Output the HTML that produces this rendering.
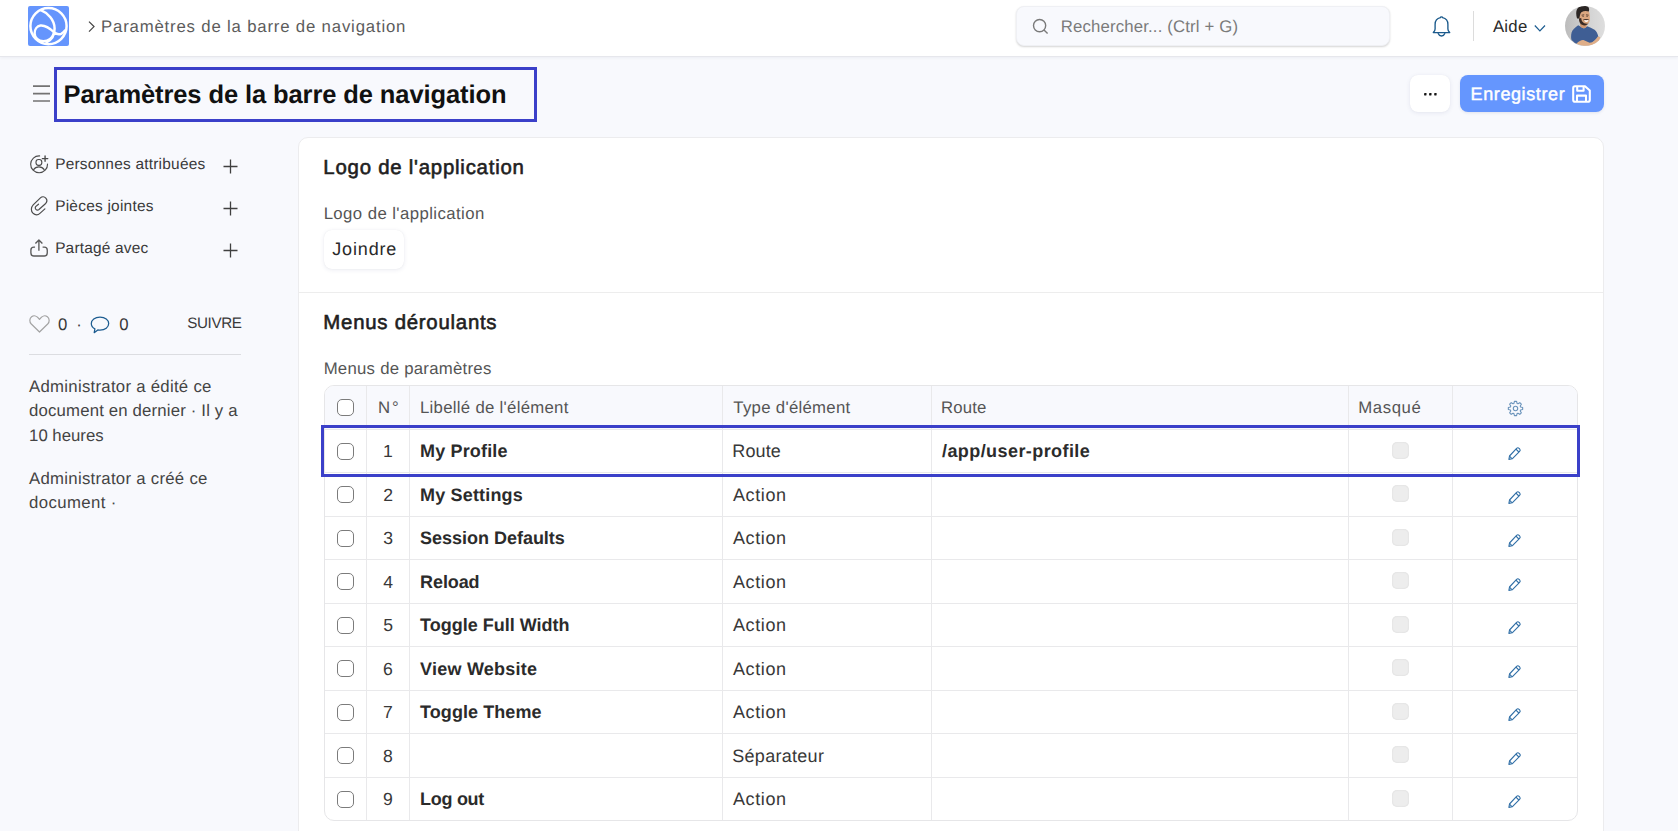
<!DOCTYPE html>
<html lang="fr">
<head>
<meta charset="utf-8">
<title>Paramètres de la barre de navigation</title>
<style>
html,body{margin:0;padding:0}
body{width:1678px;height:831px;overflow:hidden;position:relative;background:#f8f9fd;font-family:"Liberation Sans",sans-serif;}
.t{position:absolute;text-rendering:geometricPrecision;white-space:pre;line-height:20px;font-family:"Liberation Sans",sans-serif;}
.abs{position:absolute;box-sizing:border-box}
.navbar{left:0;top:0;width:1678px;height:57px;background:#fff;border-bottom:1px solid #e6e7ec;box-shadow:0 1px 3px rgba(40,50,90,.06)}
.logo{left:28px;top:6px;width:41px;height:40px;background:#6595fd;border-radius:2px}
.search{left:1016.4px;top:6px;width:374px;height:40px;background:#f8f9fd;border:1px solid #eff0f4;border-radius:8px;box-shadow:0 1px 2px rgba(0,0,0,.17)}
.vdiv{left:1473px;top:11px;width:1px;height:30px;background:#dcdcdc}
.avatar{left:1565px;top:6px;width:40px;height:40px;border-radius:50%;overflow:hidden}
.hl{border:3px solid #3b40c9}
.titlebox{left:54px;top:67px;width:483px;height:55px}
.btn-more{left:1410px;top:75px;width:40px;height:37px;background:#fff;border-radius:8px;box-shadow:0 1px 4px rgba(60,70,130,.10),0 0 1px rgba(0,0,0,.06)}
.btn-save{left:1460px;top:75px;width:144px;height:37px;background:#6596fe;border-radius:8px;box-shadow:0 1px 3px rgba(60,70,130,.12)}
.card{left:298px;top:137px;width:1306px;height:720px;background:#fff;border:1px solid #ececee;border-radius:10px}
.secline{left:299px;top:292px;width:1304px;height:1px;background:#ededed}
.btn-attach{left:324px;top:230px;width:80px;height:39px;background:#fff;border-radius:8px;box-shadow:0 1px 4px rgba(60,70,130,.10),0 0 1px rgba(0,0,0,.08)}
.sideline{left:29px;top:354px;width:212px;height:1px;background:#dcdde1}
.grid{left:324px;top:385px;width:1254px;height:436px;border:1px solid #e6e6e8;border-radius:10px;overflow:hidden;background:#fff}
.grid .head{left:0;top:0;width:100%;height:43px;background:#f8f9fd}
.hline{left:0;width:100%;height:1px;background:#e9e9eb}
.vline{top:0;width:1px;height:100%;background:#e9e9eb}
.cb{width:17px;height:17px;border:1px solid #7b7b7b;border-radius:5px;background:#fff}
.cbd{width:17px;height:17px;border-radius:5px;background:#ededed;box-shadow:inset 0 0 2px rgba(0,0,0,.10)}
.rowhl{left:321px;top:425px;width:1259px;height:52px}
svg{position:absolute;overflow:visible}

</style>
</head>
<body>
<header>
<div class="abs navbar"></div>
<div class="abs logo"><svg width="41" height="40" viewBox="0 0 41 40" fill="none" stroke="#fff" stroke-width="2.5" stroke-linecap="round"><circle cx="20.5" cy="20.1" r="18.1"/><path d="M12.8 4.2 C 20 7, 26.6 14, 26.6 22.5 C 26.6 29, 23.5 34, 18.5 36.4"/><path d="M26.3 26.6 C 22 22.5, 17 19.2, 12.5 19.6 C 9 20, 6.6 23.5, 6.6 27.6 C 6.6 32, 10.4 35.2, 15.4 35.2 C 20.5 35.2, 24.5 31.5, 26.3 26.6 C 28.5 28.2, 31 28.8, 33.2 27.8 C 34.8 27, 36 25.8, 36.8 24.6"/></svg></div>
<svg style="left:87px;top:20px" width="9" height="13" viewBox="0 0 9 13" fill="none" stroke="#474747" stroke-width="1.25"><path d="M2 1.6 L7 6.6 L2 11.6"/></svg>
<div class="abs search"></div>
<svg style="left:1032px;top:18px" width="17" height="17" viewBox="0 0 17 17" fill="none" stroke="#7a7a7a" stroke-width="1.4"><circle cx="7.6" cy="7.6" r="6.1"/><path d="M12 12 L15.6 15.4"/></svg>
<svg style="left:1432px;top:15px" width="19" height="23" viewBox="0 0 19 23" fill="none" stroke="#1b5a8c" stroke-width="1.35" stroke-linejoin="round" stroke-linecap="round"><path d="M8.4 2.6 C 8.5 1.6 10.5 1.6 10.6 2.6 C 13.8 3.2 15.9 5.8 15.9 9.4 L 15.9 14 C 15.9 15.4 16.6 16.6 17.7 17.6 L 1.3 17.6 C 2.4 16.6 3.1 15.4 3.1 14 L 3.1 9.4 C 3.1 5.8 5.2 3.2 8.4 2.6 Z"/><path d="M6.2 18.6 C 6.8 20.2 8 21 9.5 21 C 11 21 12.2 20.2 12.8 18.6"/></svg>
<div class="abs vdiv"></div>
<svg style="left:1534px;top:24px" width="12" height="9" viewBox="0 0 12 9" fill="none" stroke="#1c5c90" stroke-width="1.2"><path d="M0.8 1.5 L5.9 6.8 L11 1.5"/></svg>
<div class="abs avatar"><svg width="40" height="40" viewBox="0 0 40 40"><defs><linearGradient id="avbg" x1="0" y1="0" x2="1" y2="0"><stop offset="0" stop-color="#bcbcbc"/><stop offset="0.55" stop-color="#d2d2d2"/><stop offset="1" stop-color="#dedede"/></linearGradient></defs><rect width="40" height="40" fill="url(#avbg)"/><path d="M13.2 19.2 C 10 21.5 7.4 23.6 6.6 26.4 C 5.8 29.5 6 32.5 6.6 34 L 10.5 37.6 L 26 38 L 33.4 31 C 32.6 27.4 31.4 25 29.6 23.8 C 27 22.2 24.4 21.2 22.4 20.2 L 19 22.6 Z" fill="#3f5e94"/><path d="M15 18 L15.4 20.6 C 17 22.6 20 22.8 21.8 20.8 L21.6 17.6 Z" fill="#cf9670"/><path d="M14 6 C 13.4 9.6 13.6 13 14.6 15.4 C 15.8 18 18 19.2 20.4 19 C 22.8 18.8 24.4 17 24.8 14 C 25 11 24.8 8 24 5.4 C 20.5 3.6 16.5 4 14 6 Z" fill="#dba780"/><path d="M13.9 12.4 C 14 15.6 15 17.8 17 18.8 C 19.4 19.9 22 19.4 23.6 17.6 C 22 18 19.6 17.8 18.2 16.6 C 16.8 15.4 16.4 13.6 16.2 12 Z" fill="#3a2b25"/><path d="M16.6 9.2 L19.2 8.8 M21 8.8 L23.6 9.2" stroke="#3a2a22" stroke-width="1" fill="none" opacity=".75"/><path d="M17.4 10.4 L18.8 10.4 M21.4 10.4 L22.8 10.4" stroke="#2a201c" stroke-width="0.9" fill="none" opacity=".7"/><path d="M18.2 13.6 C 19.6 12.8 22.4 12.8 24 13.6 L23.8 14.2 C 22.4 13.8 19.8 13.8 18.6 14.4 Z" fill="#3a2b25"/><path d="M19.2 14 C 20.6 14.6 22.4 14.5 23.6 13.8 C 23.3 15.4 22.4 16 21.3 16 C 20.2 16 19.5 15.2 19.2 14 Z" fill="#fff"/><path d="M12 12.4 C 10.6 7.6 11 3.4 13.6 1.2 C 16 -0.6 20.5 -0.6 22.6 0.6 C 24.2 1.6 24.4 3.6 23.8 5.6 C 21.4 4.4 18.6 4.8 16.4 6.2 C 15.2 7.4 14.8 9.6 14.4 12.4 Z" fill="#2b2624"/><path d="M11.6 37.4 C 14 35 17 33.6 19 34.2 L 24.6 36.8 C 28 36.4 31 33.6 32.8 30.4 L 35.2 31 C 35.4 33.4 33 36.4 29.6 38.2 C 24 40.6 16 40.4 11.6 37.4 Z" fill="#dfae88"/></svg></div>
<span class="t" style="left:101.00px;top:17.01px;font-size:16.75px;font-weight:400;color:#5c5c5c;letter-spacing:0.822px">Paramètres de la barre de navigation</span>
<span class="t" style="left:1060.87px;top:17.01px;font-size:16.75px;font-weight:400;color:#7b7b7b;letter-spacing:0.153px">Rechercher... (Ctrl + G)</span>
<span class="t" style="left:1492.92px;top:16.91px;font-size:16.75px;font-weight:400;color:#2a2a2a;letter-spacing:0.262px">Aide</span>
</header>
<div class="abs hl titlebox"></div>
<svg style="left:33px;top:85px" width="17" height="18" viewBox="0 0 17 18" fill="none" stroke="#737373" stroke-width="1.6"><path d="M0 1.1H17M0 8.6H17M0 16H17"/></svg>
<div class="abs btn-more"><svg style="left:13.6px;top:17.8px" width="13" height="3" viewBox="0 0 13 3" fill="#161616"><rect x="0.1" y="0.1" width="2.4" height="2.4" rx="0.4"/><rect x="5.1" y="0.1" width="2.4" height="2.4" rx="0.4"/><rect x="10.2" y="0.1" width="2.4" height="2.4" rx="0.4"/></svg></div>
<div class="abs btn-save"><svg style="left:112px;top:10px" width="19" height="18" viewBox="0 0 19 18" fill="none" stroke="#fff" stroke-width="2.05" stroke-linejoin="round"><path d="M1.2 3 C1.2 2 2 1.2 3 1.2 L13 1.2 L17.8 5.6 L17.8 15 C17.8 16 17 16.8 16 16.8 L3 16.8 C2 16.8 1.2 16 1.2 15 Z"/><path d="M5.2 1.6 V5.8 H11.6 V1.6"/><path d="M5 16.6 V10.6 H14 V16.6"/></svg></div>
<aside>
<svg style="left:30px;top:154.5px" width="19" height="19" viewBox="0 0 19 19" fill="none" stroke="#4c4c4c" stroke-width="1.15" stroke-linecap="round"><path d="M17.55 9 A8.45 8.45 0 1 1 9.6 0.85"/><rect x="6" y="4.5" width="5.8" height="5.8" rx="2.5"/><path d="M3.6 14.6 C4.8 12.6 6.8 11.8 8.9 11.8 C11 11.8 13 12.6 14.2 14.6"/><path d="M15.07 0.9 V6.3 M12.37 3.6 H17.77" stroke-width="1.4"/></svg>
<svg style="left:30px;top:196px" width="19" height="20" viewBox="0 0 19 20" fill="none" stroke="#4c4c4c" stroke-width="1.2" stroke-linecap="round"><path d="M14.9 12.9 L10.2 17.1 C 8.2 19, 5.2 19.2, 3 17.2 C 0.8 15, 0.8 11.4, 3.2 8.8 L10.4 1.9 C 12 0.5, 14.4 0.6, 15.8 2.2 C 17.2 3.8, 17 6.2, 15.4 7.8 L9.2 13.3 C 8.2 14.3, 6.8 14.3, 5.9 13.4 C 5 12.5, 5.1 11.2, 5.9 10.4 L8.5 8.2"/></svg>
<svg style="left:30px;top:239px" width="19" height="19" viewBox="0 0 19 19" fill="none" stroke="#5a5a5a" stroke-width="1.35" stroke-linecap="butt" stroke-linejoin="round"><path d="M5.05 8.1 H3.9 C2.2 8.1 0.9 9.4 0.9 11.1 V13.95 C0.9 15.65 2.2 16.95 3.9 16.95 H14.26 C15.96 16.95 17.26 15.65 17.26 13.95 V11.1 C17.26 9.4 15.96 8.1 14.26 8.1 H12.6"/><path d="M8.9 11.7 V1.2 M5.4 4.5 L8.9 1 L12.4 4.5"/></svg>
<svg style="left:223.3px;top:158.5px" width="15" height="15" viewBox="0 0 15 15" fill="none" stroke="#404040" stroke-width="1.3"><path d="M7.5 0.5 V14.5 M0.5 7.5 H14.5"/></svg>
<svg style="left:223.3px;top:200.5px" width="15" height="15" viewBox="0 0 15 15" fill="none" stroke="#404040" stroke-width="1.3"><path d="M7.5 0.5 V14.5 M0.5 7.5 H14.5"/></svg>
<svg style="left:223.3px;top:242.5px" width="15" height="15" viewBox="0 0 15 15" fill="none" stroke="#404040" stroke-width="1.3"><path d="M7.5 0.5 V14.5 M0.5 7.5 H14.5"/></svg>
<svg style="left:29px;top:315px" width="21" height="18" viewBox="0 0 21 18" fill="none" stroke="#a3a3a3" stroke-width="1.2" stroke-linejoin="round"><path d="M10.5 17 L2.3 9 C0.2 6.8 0.4 3.4 2.6 1.8 C4.8 0.2 7.6 0.9 9.2 2.8 L10.5 4.4 L11.8 2.8 C13.4 0.9 16.2 0.2 18.4 1.8 C20.6 3.4 20.8 6.8 18.7 9 Z"/></svg>
<svg style="left:90px;top:315.5px" width="20" height="18" viewBox="0 0 20 18" fill="none" stroke="#1c5c90" stroke-width="1.25" stroke-linejoin="round"><path d="M10 1 C4.9 1 1.3 3.9 1.3 7.5 C1.3 9.8 2.7 11.7 4.9 12.9 L4.2 16.7 L7.8 13.9 C8.5 14 9.2 14.1 10 14.1 C15.1 14.1 18.7 11.1 18.7 7.5 C18.7 3.9 15.1 1 10 1 Z"/></svg>
<div class="abs sideline"></div>
<span class="t" style="left:55.14px;top:154.90px;font-size:15.45px;font-weight:400;color:#3a3a3a;letter-spacing:0.221px">Personnes attribuées</span>
<span class="t" style="left:55.14px;top:196.90px;font-size:15.45px;font-weight:400;color:#3a3a3a;letter-spacing:0.243px">Pièces jointes</span>
<span class="t" style="left:55.14px;top:238.61px;font-size:15.45px;font-weight:400;color:#3a3a3a;letter-spacing:0.191px">Partagé avec</span>
<span class="t" style="left:58.09px;top:314.71px;font-size:16.75px;font-weight:400;color:#3a3a3a;letter-spacing:0.000px">0</span>
<span class="t" style="left:76.36px;top:314.71px;font-size:16.75px;font-weight:400;color:#3a3a3a;letter-spacing:0.000px">·</span>
<span class="t" style="left:119.29px;top:314.71px;font-size:16.75px;font-weight:400;color:#3a3a3a;letter-spacing:0.000px">0</span>
<span class="t" style="left:187.14px;top:313.91px;font-size:15.2px;font-weight:400;color:#3a3a3a;letter-spacing:-0.343px">SUIVRE</span>
<span class="t" style="left:29.07px;top:376.91px;font-size:16.75px;font-weight:400;color:#444444;letter-spacing:0.275px">Administrator a édité ce</span>
<span class="t" style="left:29.07px;top:400.91px;font-size:16.75px;font-weight:400;color:#444444;letter-spacing:0.170px">document en dernier · Il y a</span>
<span class="t" style="left:29.07px;top:425.71px;font-size:16.75px;font-weight:400;color:#444444;letter-spacing:0.005px">10 heures</span>
<span class="t" style="left:29.07px;top:468.60px;font-size:16.75px;font-weight:400;color:#444444;letter-spacing:0.276px">Administrator a créé ce</span>
<span class="t" style="left:29.07px;top:492.71px;font-size:16.75px;font-weight:400;color:#444444;letter-spacing:0.398px">document ·</span>
</aside>
<main>
<div class="abs card"></div>
<div class="abs secline"></div>
<div class="abs btn-attach"></div>
<div class="abs grid">
<div class="abs head"></div>
<div class="abs hline" style="top:43px"></div>
<div class="abs hline" style="top:86px"></div>
<div class="abs hline" style="top:130px"></div>
<div class="abs hline" style="top:173px"></div>
<div class="abs hline" style="top:217px"></div>
<div class="abs hline" style="top:260px"></div>
<div class="abs hline" style="top:304px"></div>
<div class="abs hline" style="top:347px"></div>
<div class="abs hline" style="top:391px"></div>
<div class="abs vline" style="left:41.0px"></div>
<div class="abs vline" style="left:84.0px"></div>
<div class="abs vline" style="left:397.0px"></div>
<div class="abs vline" style="left:606.0px"></div>
<div class="abs vline" style="left:1023.0px"></div>
<div class="abs vline" style="left:1127.0px"></div>
</div>
<div class="abs cb" style="left:337px;top:399px"></div>
<div class="abs cb" style="left:337px;top:442.7px"></div>
<div class="abs cbd" style="left:1392px;top:441.8px"></div>
<svg style="left:1508px;top:447.2px" width="13" height="13" viewBox="0 0 13 13" fill="none" stroke="#2f6ea6" stroke-width="1.1" stroke-linejoin="round"><path d="M8.6 1.4 C9.3 0.7 10.4 0.7 11.1 1.4 L11.6 1.9 C12.3 2.6 12.3 3.7 11.6 4.4 L4.2 11.8 L0.9 12.4 L1.5 9 Z"/><path d="M8 2.2 L10.8 5"/><path d="M1.5 9.2 L3.9 11.6"/></svg>
<div class="abs cb" style="left:337px;top:486.2px"></div>
<div class="abs cbd" style="left:1392px;top:485.3px"></div>
<svg style="left:1508px;top:490.7px" width="13" height="13" viewBox="0 0 13 13" fill="none" stroke="#2f6ea6" stroke-width="1.1" stroke-linejoin="round"><path d="M8.6 1.4 C9.3 0.7 10.4 0.7 11.1 1.4 L11.6 1.9 C12.3 2.6 12.3 3.7 11.6 4.4 L4.2 11.8 L0.9 12.4 L1.5 9 Z"/><path d="M8 2.2 L10.8 5"/><path d="M1.5 9.2 L3.9 11.6"/></svg>
<div class="abs cb" style="left:337px;top:529.7px"></div>
<div class="abs cbd" style="left:1392px;top:528.8px"></div>
<svg style="left:1508px;top:534.2px" width="13" height="13" viewBox="0 0 13 13" fill="none" stroke="#2f6ea6" stroke-width="1.1" stroke-linejoin="round"><path d="M8.6 1.4 C9.3 0.7 10.4 0.7 11.1 1.4 L11.6 1.9 C12.3 2.6 12.3 3.7 11.6 4.4 L4.2 11.8 L0.9 12.4 L1.5 9 Z"/><path d="M8 2.2 L10.8 5"/><path d="M1.5 9.2 L3.9 11.6"/></svg>
<div class="abs cb" style="left:337px;top:573.2px"></div>
<div class="abs cbd" style="left:1392px;top:572.3px"></div>
<svg style="left:1508px;top:577.7px" width="13" height="13" viewBox="0 0 13 13" fill="none" stroke="#2f6ea6" stroke-width="1.1" stroke-linejoin="round"><path d="M8.6 1.4 C9.3 0.7 10.4 0.7 11.1 1.4 L11.6 1.9 C12.3 2.6 12.3 3.7 11.6 4.4 L4.2 11.8 L0.9 12.4 L1.5 9 Z"/><path d="M8 2.2 L10.8 5"/><path d="M1.5 9.2 L3.9 11.6"/></svg>
<div class="abs cb" style="left:337px;top:616.7px"></div>
<div class="abs cbd" style="left:1392px;top:615.8px"></div>
<svg style="left:1508px;top:621.2px" width="13" height="13" viewBox="0 0 13 13" fill="none" stroke="#2f6ea6" stroke-width="1.1" stroke-linejoin="round"><path d="M8.6 1.4 C9.3 0.7 10.4 0.7 11.1 1.4 L11.6 1.9 C12.3 2.6 12.3 3.7 11.6 4.4 L4.2 11.8 L0.9 12.4 L1.5 9 Z"/><path d="M8 2.2 L10.8 5"/><path d="M1.5 9.2 L3.9 11.6"/></svg>
<div class="abs cb" style="left:337px;top:660.2px"></div>
<div class="abs cbd" style="left:1392px;top:659.3px"></div>
<svg style="left:1508px;top:664.7px" width="13" height="13" viewBox="0 0 13 13" fill="none" stroke="#2f6ea6" stroke-width="1.1" stroke-linejoin="round"><path d="M8.6 1.4 C9.3 0.7 10.4 0.7 11.1 1.4 L11.6 1.9 C12.3 2.6 12.3 3.7 11.6 4.4 L4.2 11.8 L0.9 12.4 L1.5 9 Z"/><path d="M8 2.2 L10.8 5"/><path d="M1.5 9.2 L3.9 11.6"/></svg>
<div class="abs cb" style="left:337px;top:703.7px"></div>
<div class="abs cbd" style="left:1392px;top:702.8px"></div>
<svg style="left:1508px;top:708.2px" width="13" height="13" viewBox="0 0 13 13" fill="none" stroke="#2f6ea6" stroke-width="1.1" stroke-linejoin="round"><path d="M8.6 1.4 C9.3 0.7 10.4 0.7 11.1 1.4 L11.6 1.9 C12.3 2.6 12.3 3.7 11.6 4.4 L4.2 11.8 L0.9 12.4 L1.5 9 Z"/><path d="M8 2.2 L10.8 5"/><path d="M1.5 9.2 L3.9 11.6"/></svg>
<div class="abs cb" style="left:337px;top:747.2px"></div>
<div class="abs cbd" style="left:1392px;top:746.3px"></div>
<svg style="left:1508px;top:751.7px" width="13" height="13" viewBox="0 0 13 13" fill="none" stroke="#2f6ea6" stroke-width="1.1" stroke-linejoin="round"><path d="M8.6 1.4 C9.3 0.7 10.4 0.7 11.1 1.4 L11.6 1.9 C12.3 2.6 12.3 3.7 11.6 4.4 L4.2 11.8 L0.9 12.4 L1.5 9 Z"/><path d="M8 2.2 L10.8 5"/><path d="M1.5 9.2 L3.9 11.6"/></svg>
<div class="abs cb" style="left:337px;top:790.7px"></div>
<div class="abs cbd" style="left:1392px;top:789.8px"></div>
<svg style="left:1508px;top:795.2px" width="13" height="13" viewBox="0 0 13 13" fill="none" stroke="#2f6ea6" stroke-width="1.1" stroke-linejoin="round"><path d="M8.6 1.4 C9.3 0.7 10.4 0.7 11.1 1.4 L11.6 1.9 C12.3 2.6 12.3 3.7 11.6 4.4 L4.2 11.8 L0.9 12.4 L1.5 9 Z"/><path d="M8 2.2 L10.8 5"/><path d="M1.5 9.2 L3.9 11.6"/></svg>
<svg style="left:1506.6px;top:400.4px" width="17" height="17" viewBox="0 0 17 17" fill="none" stroke="#6a93bb" stroke-width="1.1" stroke-linejoin="round"><path d="M15.67 7.42 L15.67 9.58 L13.61 10.08 L13.23 11.00 L14.34 12.80 L12.80 14.34 L11.00 13.23 L10.08 13.61 L9.58 15.67 L7.42 15.67 L6.92 13.61 L6.00 13.23 L4.20 14.34 L2.66 12.80 L3.77 11.00 L3.39 10.08 L1.33 9.58 L1.33 7.42 L3.39 6.92 L3.77 6.00 L2.66 4.20 L4.20 2.66 L6.00 3.77 L6.92 3.39 L7.42 1.33 L9.58 1.33 L10.08 3.39 L11.00 3.77 L12.80 2.66 L14.34 4.20 L13.23 6.00 L13.61 6.92Z"/><circle cx="8.5" cy="8.5" r="2.2"/></svg>
<div class="abs hl rowhl"></div>
<span class="t" style="left:63.49px;top:84.70px;font-size:25.5px;font-weight:700;color:#111111;letter-spacing:-0.098px">Paramètres de la barre de navigation</span>
<span class="t" style="left:1470.59px;top:84.31px;font-size:18.0px;font-weight:400;color:#ffffff;letter-spacing:0.602px;-webkit-text-stroke:0.45px #ffffff">Enregistrer</span>
<span class="t" style="left:323.37px;top:157.91px;font-size:20.4px;font-weight:400;color:#1f1f1f;letter-spacing:0.761px;-webkit-text-stroke:0.6px #1f1f1f">Logo de l&#x27;application</span>
<span class="t" style="left:323.63px;top:204.01px;font-size:16.75px;font-weight:400;color:#555555;letter-spacing:0.422px">Logo de l&#x27;application</span>
<span class="t" style="left:332.25px;top:238.60px;font-size:18.0px;font-weight:400;color:#2a2a2a;letter-spacing:0.847px">Joindre</span>
<span class="t" style="left:323.37px;top:313.10px;font-size:20.4px;font-weight:400;color:#1f1f1f;letter-spacing:0.741px;-webkit-text-stroke:0.6px #1f1f1f">Menus déroulants</span>
<span class="t" style="left:323.63px;top:359.41px;font-size:16.75px;font-weight:400;color:#555555;letter-spacing:0.262px">Menus de paramètres</span>
<span class="t" style="left:378.09px;top:398.01px;font-size:16.75px;font-weight:400;color:#555555;letter-spacing:1.890px">N°</span>
<span class="t" style="left:420.01px;top:398.01px;font-size:16.75px;font-weight:400;color:#555555;letter-spacing:0.289px">Libellé de l&#x27;élément</span>
<span class="t" style="left:733.37px;top:398.01px;font-size:16.75px;font-weight:400;color:#555555;letter-spacing:0.291px">Type d&#x27;élément</span>
<span class="t" style="left:941.09px;top:398.01px;font-size:16.75px;font-weight:400;color:#555555;letter-spacing:0.111px">Route</span>
<span class="t" style="left:1358.37px;top:398.01px;font-size:16.75px;font-weight:400;color:#555555;letter-spacing:0.550px">Masqué</span>
<span class="t" style="left:382.92px;top:441.01px;font-size:17.6px;font-weight:400;color:#383838;letter-spacing:0.000px">1</span>
<span class="t" style="left:420.10px;top:441.01px;font-size:18.0px;font-weight:700;color:#2b2b2b;letter-spacing:0.149px">My Profile</span>
<span class="t" style="left:732.25px;top:441.01px;font-size:18.0px;font-weight:400;color:#383838;letter-spacing:0.148px">Route</span>
<span class="t" style="left:942.00px;top:441.01px;font-size:18.0px;font-weight:700;color:#2b2b2b;letter-spacing:0.423px">/app/user-profile</span>
<span class="t" style="left:383.14px;top:484.51px;font-size:17.6px;font-weight:400;color:#383838;letter-spacing:0.000px">2</span>
<span class="t" style="left:420.10px;top:484.51px;font-size:18.0px;font-weight:700;color:#2b2b2b;letter-spacing:0.163px">My Settings</span>
<span class="t" style="left:733.01px;top:484.51px;font-size:18.0px;font-weight:400;color:#383838;letter-spacing:0.613px">Action</span>
<span class="t" style="left:383.13px;top:528.01px;font-size:17.6px;font-weight:400;color:#383838;letter-spacing:0.000px">3</span>
<span class="t" style="left:420.10px;top:528.01px;font-size:18.0px;font-weight:700;color:#2b2b2b;letter-spacing:-0.020px">Session Defaults</span>
<span class="t" style="left:733.01px;top:528.01px;font-size:18.0px;font-weight:400;color:#383838;letter-spacing:0.613px">Action</span>
<span class="t" style="left:383.14px;top:571.51px;font-size:17.6px;font-weight:400;color:#383838;letter-spacing:0.000px">4</span>
<span class="t" style="left:420.10px;top:571.51px;font-size:18.0px;font-weight:700;color:#2b2b2b;letter-spacing:-0.110px">Reload</span>
<span class="t" style="left:733.01px;top:571.51px;font-size:18.0px;font-weight:400;color:#383838;letter-spacing:0.613px">Action</span>
<span class="t" style="left:383.13px;top:615.01px;font-size:17.6px;font-weight:400;color:#383838;letter-spacing:0.000px">5</span>
<span class="t" style="left:420.10px;top:615.01px;font-size:18.0px;font-weight:700;color:#2b2b2b;letter-spacing:-0.002px">Toggle Full Width</span>
<span class="t" style="left:733.01px;top:615.01px;font-size:18.0px;font-weight:400;color:#383838;letter-spacing:0.613px">Action</span>
<span class="t" style="left:383.08px;top:658.51px;font-size:17.6px;font-weight:400;color:#383838;letter-spacing:0.000px">6</span>
<span class="t" style="left:420.10px;top:658.51px;font-size:18.0px;font-weight:700;color:#2b2b2b;letter-spacing:0.232px">View Website</span>
<span class="t" style="left:733.01px;top:658.51px;font-size:18.0px;font-weight:400;color:#383838;letter-spacing:0.613px">Action</span>
<span class="t" style="left:383.10px;top:702.01px;font-size:17.6px;font-weight:400;color:#383838;letter-spacing:0.000px">7</span>
<span class="t" style="left:420.10px;top:702.01px;font-size:18.0px;font-weight:700;color:#2b2b2b;letter-spacing:0.063px">Toggle Theme</span>
<span class="t" style="left:733.01px;top:702.01px;font-size:18.0px;font-weight:400;color:#383838;letter-spacing:0.613px">Action</span>
<span class="t" style="left:383.07px;top:745.51px;font-size:17.6px;font-weight:400;color:#383838;letter-spacing:0.000px">8</span>
<span class="t" style="left:732.27px;top:745.51px;font-size:18.0px;font-weight:400;color:#383838;letter-spacing:0.283px">Séparateur</span>
<span class="t" style="left:383.07px;top:789.01px;font-size:17.6px;font-weight:400;color:#383838;letter-spacing:0.000px">9</span>
<span class="t" style="left:420.10px;top:789.01px;font-size:18.0px;font-weight:700;color:#2b2b2b;letter-spacing:-0.294px">Log out</span>
<span class="t" style="left:733.01px;top:789.01px;font-size:18.0px;font-weight:400;color:#383838;letter-spacing:0.613px">Action</span>
</main>
</body>
</html>
